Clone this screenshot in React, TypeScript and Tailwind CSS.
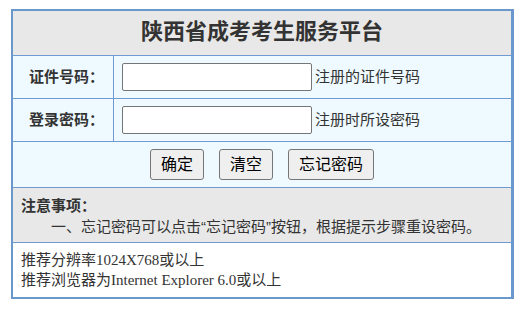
const cjk = "font-['Liberation_Sans','Noto_Sans_CJK_SC',sans-serif]";

const FieldRow = ({ label, hint }: { label: string; hint: string }) => (
  <div className="flex h-[43px] border-b border-[#6f9bd0] bg-[#eefaff]">
    <div className="flex w-[101px] shrink-0 items-center justify-center border-r border-[#6f9bd0] pl-[7px] text-[15px] font-bold text-[#333]">
      {label}
    </div>
    <div className="flex items-center pl-[8px]">
      <input
        type="text"
        className="h-[28px] w-[190px] rounded-[2px] border border-[#767676] bg-white px-1 outline-none"
      />
      <span className="ml-[3px] text-[15px] leading-[20px] text-[#333]">{hint}</span>
    </div>
  </div>
);

const Btn = ({ children }: { children: string }) => (
  <button
    type="button"
    className="h-[31px] rounded-[3px] border border-[#767676] bg-[#efefef] px-[10px] text-[16px] leading-[20px] text-black"
  >
    {children}
  </button>
);

export default function App() {
  return (
    <div className={`min-h-[315px] bg-white pl-[11px] pt-[9px] ${cjk}`}>
      <div className="w-[503px] border-2 border-r-[3px] border-[#6a97cc]">
        <div className="flex h-[45px] items-center justify-center border-b border-[#6f9bd0] bg-[#e8e8e8] pb-[2px]">
          <h1 className="text-[22px] font-bold leading-[28px] text-[#333]">陕西省成考考生服务平台</h1>
        </div>

        <FieldRow label="证件号码：" hint="注册的证件号码" />
        <FieldRow label="登录密码：" hint="注册时所设密码" />

        <div className="flex h-[46px] items-center justify-center gap-[15px] border-b border-[#6f9bd0] bg-[#eefaff]">
          <Btn>确定</Btn>
          <Btn>清空</Btn>
          <Btn>忘记密码</Btn>
        </div>

        <div className="h-[55px] border-b border-[#6f9bd0] bg-[#e8e8e8] px-[8px] pt-[7px] text-[15px] leading-[21px] text-[#333]">
          <div className="font-bold">注意事项：</div>
          <div className="indent-[30px]">一、忘记密码可以点击“忘记密码”按钮，根据提示步骤重设密码。</div>
        </div>

        <div className="h-[54px] bg-white px-[8px] pt-[7px] font-['Liberation_Serif','Noto_Sans_CJK_SC',serif] text-[15px] leading-[20px] text-[#333]">
          <div>推荐分辨率1024X768或以上</div>
          <div>推荐浏览器为Internet Explorer 6.0或以上</div>
        </div>
      </div>
    </div>
  );
}
